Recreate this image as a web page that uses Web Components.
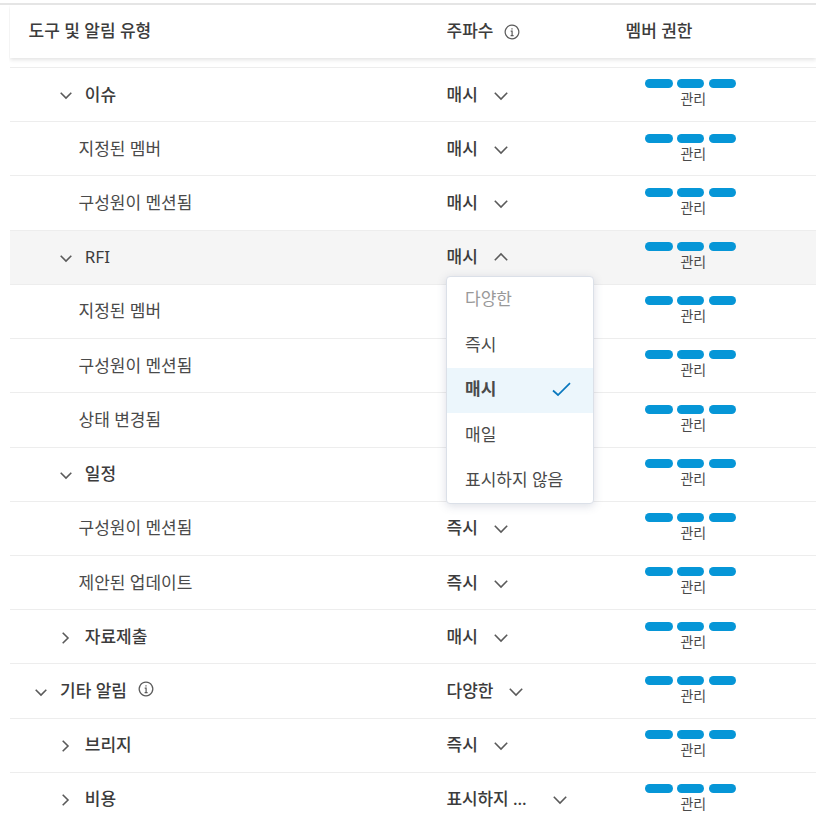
<!DOCTYPE html>
<html lang="ko">
<head>
<meta charset="utf-8">
<title>알림 설정</title>
<style>
  html, body {
    margin: 0;
    background: #fff;
  }
  body {
    width: 816px;
    height: 825px;
    overflow: hidden;
    font-family: "Noto Sans", "Noto Sans CJK KR", sans-serif;
    font-size: 17px;
    line-height: 24px;
    color: #3c3c3c;
  }
</style>
</head>
<body>
<notification-table></notification-table>

<script>
const ICONS = {
  down: { w: 14, h: 8, d: 'M.8 .8 L7 7 L13.2 .8' },
  up: { w: 14, h: 8, d: 'M.8 7.2 L7 1 L13.2 7.2' },
  open: { w: 12, h: 7, d: 'M.7 .7 L6 6 L11.3 .7' },
  closed: { w: 7, h: 12, d: 'M.7 .7 L6 6 L.7 11.3' },
  check: { w: 19, h: 15, d: 'M1 8.5 L6 13 L18 1.2' },
  info: { w: 16, h: 16, d: 'M8 1.2 A6.8 6.8 0 1 1 7.99 1.2 Z M6.7 7.2 H8.1 V11.6 M6.6 11.6 H9.6 M8 4.2 V5.6' }
};

class LineIcon extends HTMLElement {
  constructor() {
    super();
    this.attachShadow({ mode: 'open' });
  }

  connectedCallback() {
    const icon = ICONS[this.getAttribute('name')];
    this.shadowRoot.innerHTML = `
      <style>
        :host { display: block; flex: none; color: #5a5a5a; }
        svg { display: block; overflow: visible; }
        path { fill: none; stroke: currentColor; stroke-width: var(--stroke, 1.6); }
      </style>
      <svg width="${icon.w}" height="${icon.h}" viewBox="0 0 ${icon.w} ${icon.h}"><path d="${icon.d}"/></svg>
    `;
  }
}

class PermissionLevel extends HTMLElement {
  constructor() {
    super();
    this.attachShadow({ mode: 'open' });
    this.shadowRoot.innerHTML = `
      <style>
        :host { display: block; width: 91px; font-size: 14px; line-height: 20px; }
        .bars { display: flex; gap: 4.5px; }
        .bars i { flex: 1; height: 9px; border-radius: 4.5px; background: #0696d7; }
        .label { text-align: center; padding-left: 5px; margin-top: 1px; color: #4a4a4a; }
      </style>
      <div class="bars"><i></i><i></i><i></i></div>
      <div class="label"><slot></slot></div>
    `;
  }
}

class FrequencyMenu extends HTMLElement {
  constructor() {
    super();
    this.attachShadow({ mode: 'open' });
    this.shadowRoot.innerHTML = `
      <style>
        :host {
          display: block;
          box-sizing: border-box;
          width: 148px;
          border: 1px solid #dbe0e8;
          border-radius: 4px;
          background: #fff;
          box-shadow: 0 2px 10px rgba(60, 70, 110, .18);
          overflow: hidden;
          font-weight: 400;
          color: #4a4a4a;
        }
        .item {
          display: flex;
          align-items: center;
          justify-content: space-between;
          box-sizing: border-box;
          height: 45.2px;
          padding: 0 22px 1px 18.5px;
          white-space: nowrap;
        }
        .disabled { color: #999; }
        .selected { background: #ecf6fc; font-weight: 600; padding-bottom: 3px; }
        .selected line-icon { margin-top: 2px; }
        line-icon { color: #0a78be; --stroke: 1.7; }
      </style>
      <div class="item disabled"><span>다양한</span></div>
      <div class="item"><span>즉시</span></div>
      <div class="item selected"><span>매시</span><line-icon name="check"></line-icon></div>
      <div class="item"><span>매일</span></div>
      <div class="item"><span>표시하지 않음</span></div>
    `;
  }
}

class FrequencySelect extends HTMLElement {
  constructor() {
    super();
    this.attachShadow({ mode: 'open' });
  }

  connectedCallback() {
    const open = this.hasAttribute('open');
    this.shadowRoot.innerHTML = `
      <style>
        :host { display: flex; align-items: center; position: relative; font-weight: 500; }
        :host([wide]) .value { width: 90px; letter-spacing: -.1px; }
        .value { white-space: nowrap; }
        line-icon { margin-left: 16px; margin-top: 2px; }
        line-icon[name="up"] { margin-top: 0; }
        frequency-menu { position: absolute; left: -1px; top: 31px; z-index: 10; }
      </style>
      <span class="value"><slot></slot></span>
      <line-icon name="${open ? 'up' : 'down'}"></line-icon>
      ${open ? '<frequency-menu></frequency-menu>' : ''}
    `;
  }
}

class NotificationRow extends HTMLElement {
  constructor() {
    super();
    this.attachShadow({ mode: 'open' });
  }

  connectedCallback() {
    const toggle = this.getAttribute('toggle');
    this.shadowRoot.innerHTML = `
      <style>
        :host {
          display: grid;
          grid-template-columns: 418px 179px 1fr;
          box-sizing: border-box;
          height: 54.23px;
          border-top: 1px solid #ededed;
        }
        :host([active]) { background: #f5f5f5; }
        .name { display: flex; align-items: center; padding-left: 68.5px; color: #4a4a4a; }
        .name line-icon { margin-top: 2px; }
        .toggle { display: flex; width: 13px; justify-content: center; margin-right: 12.5px; }
        :host([toggle]) .name { padding-left: 49.3px; font-weight: 500; color: #3c3c3c; }
        :host([level="1"]) .name { padding-left: 24.5px; }
        :host([level="1"]) .name > span:not(.toggle) { margin-top: -1px; }
        :host([plain]) .name { font-weight: 400; }
        .name .info { margin-left: 11px; margin-top: -5px; }
        .frequency { display: flex; align-items: center; padding-left: 18.5px; }
        .permission { padding: 11.4px 0 0 38.3px; }
      </style>
      <div class="name">
        ${toggle ? `<span class="toggle"><line-icon name="${toggle}"></line-icon></span>` : ''}
        <span><slot></slot></span>
        ${this.hasAttribute('info') ? '<line-icon class="info" name="info" style="--stroke:1.2"></line-icon>' : ''}
      </div>
      <div class="frequency"><slot name="frequency"></slot></div>
      <div class="permission"><permission-level>관리</permission-level></div>
    `;
  }
}

class TableHeader extends HTMLElement {
  constructor() {
    super();
    this.attachShadow({ mode: 'open' });
    this.shadowRoot.innerHTML = `
      <style>
        :host {
          display: grid;
          grid-template-columns: 418px 179px 1fr;
          box-sizing: border-box;
          height: 53px;
          padding-bottom: 2px;
          align-items: center;
          font-weight: 500;
          background: #fff;
          box-shadow: 0 2px 4px rgba(0, 0, 0, .11);
          clip-path: inset(0 0 -8px -1px);
        }
        div { display: flex; align-items: center; padding-left: 18.5px; }
        line-icon { margin-left: 11px; margin-top: 2px; --stroke: 1.2; }
      </style>
      <div>도구 및 알림 유형</div>
      <div>주파수<line-icon name="info"></line-icon></div>
      <div>멤버 권한</div>
    `;
  }
}

const ROWS = [
  { name: '이슈', toggle: 'open', freq: '매시' },
  { name: '지정된 멤버', freq: '매시' },
  { name: '구성원이 멘션됨', freq: '매시' },
  { name: 'RFI', toggle: 'open', freq: '매시', menu: true },
  { name: '지정된 멤버' },
  { name: '구성원이 멘션됨' },
  { name: '상태 변경됨' },
  { name: '일정', toggle: 'open' },
  { name: '구성원이 멘션됨', freq: '즉시' },
  { name: '제안된 업데이트', freq: '즉시' },
  { name: '자료제출', toggle: 'closed', freq: '매시' },
  { name: '기타 알림', toggle: 'open', freq: '다양한', level: 1, info: true },
  { name: '브리지', toggle: 'closed', freq: '즉시' },
  { name: '비용', toggle: 'closed', freq: '표시하지 ...', wide: true }
];

class NotificationTable extends HTMLElement {
  constructor() {
    super();
    this.attachShadow({ mode: 'open' });
    this.shadowRoot.innerHTML = `
      <style>
        :host { display: block; padding-top: 3px; }
        .rule { height: 2px; background: #e5e5e5; }
        .table { padding-left: 10px; }
        .rows { padding-top: 9px; }
      </style>
      <div class="rule"></div>
      <div class="table">
        <table-header></table-header>
        <div class="rows">
          ${ROWS.map(row => `
            <notification-row
              ${row.toggle ? `toggle="${row.toggle}"` : ''}
              ${row.level ? `level="${row.level}"` : ''}
              ${row.info ? 'info' : ''}
              ${row.menu ? 'active plain' : ''}
            >${row.name}${row.freq ? `<frequency-select slot="frequency" ${row.menu ? 'open' : ''} ${row.wide ? 'wide' : ''}>${row.freq}</frequency-select>` : ''}</notification-row>
          `).join('')}
        </div>
      </div>
    `;
  }
}

customElements.define('line-icon', LineIcon);
customElements.define('permission-level', PermissionLevel);
customElements.define('frequency-menu', FrequencyMenu);
customElements.define('frequency-select', FrequencySelect);
customElements.define('notification-row', NotificationRow);
customElements.define('table-header', TableHeader);
customElements.define('notification-table', NotificationTable);
</script>
</body>
</html>
